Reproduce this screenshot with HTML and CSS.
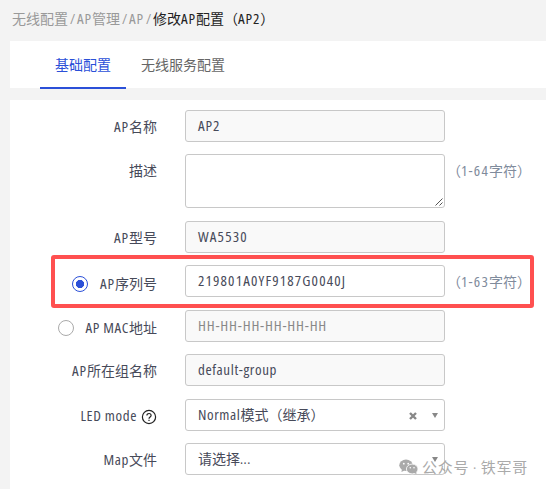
FILE: index.html
```html
<!DOCTYPE html>
<html lang="zh-CN">
<head>
<meta charset="utf-8">
<title>修改AP配置</title>
<link rel="stylesheet" href="styles.css">
</head>
<body>
<nav class="crumbs"><span>无线配置</span><i>/</i><span><span class="latin">AP</span>管理</span><i>/</i><span class="latin">AP</span><i>/</i><b>修改<span class="latin">AP</span>配置（<span class="latin">AP2</span>）</b></nav>
<div class="tabs"><a class="tab active">基础配置</a><a class="tab">无线服务配置</a></div>
<main class="form">
  <div class="row"><label><span class="latin">AP</span>名称</label><div class="field disabled"><span class="latin">AP2</span></div></div>
  <div class="row tall"><label>描述</label><div class="field area"><svg class="grip" width="8" height="8" viewBox="0 0 8 8"><path d="M.5 7.5l7-7M4.5 7.5l3-3"/></svg></div><span class="hint">（<span class="latin">1-64</span>字符）</span></div>
  <div class="row"><label><span class="latin">AP</span>型号</label><div class="field disabled"><span class="latin num">WA5530</span></div></div>
  <div class="row serial"><label><span class="radio checked"></span><span class="latin">AP</span>序列号</label><div class="field"><span class="latin num">219801A0YF9187G0040J</span></div><span class="hint">（<span class="latin">1-63</span>字符）</span><div class="highlight"></div></div>
  <div class="row mac"><label><span class="radio"></span><span class="latin word">AP MAC</span>地址</label><div class="field disabled placeholder"><span class="latin mask">HH-HH-HH-HH-HH-HH</span></div></div>
  <div class="row"><label><span class="latin">AP</span>所在组名称</label><div class="field disabled"><span class="latin word">default-group</span></div></div>
  <div class="row led"><label><span class="latin word">LED mode</span><svg class="help" width="16" height="16" viewBox="0 0 16 16"><circle cx="8" cy="8" r="6.6"/><path d="M5.9 6.5c0-2.7 4.2-2.6 4.2 0 0 1.5-2.1 1.5-2.1 3.2M8 10.8v1.3"/></svg></label><div class="field select"><span class="latin word">Normal</span>模式（继承）<svg class="clear" width="8" height="8" viewBox="0 0 8 8"><path d="M1 1l6 6M7 1L1 7"/></svg><svg class="arrow" width="6" height="5" viewBox="0 0 6 5"><path d="M0 0h6L3 5z"/></svg></div></div>
  <div class="row"><label><span class="latin word">Map</span>文件</label><div class="field select">请选择<span class="dots">...</span><svg class="arrow" width="6" height="5" viewBox="0 0 6 5"><path d="M0 0h6L3 5z"/></svg></div></div>
</main>
<div class="watermark"><svg width="20" height="16" viewBox="0 0 20 16"><ellipse cx="7" cy="6.2" rx="6.7" ry="5.7"/><path d="M3 10l-.6 3 3.2-1.6z"/><circle class="eye" cx="4.8" cy="4.7" r=".9"/><circle class="eye" cx="9.2" cy="4.7" r=".9"/><ellipse class="front" cx="13.2" cy="10" rx="5.8" ry="4.9"/><path d="M15 13.7l2.5 1.6-.4-2.8z"/><circle class="eye" cx="11.3" cy="8.7" r=".8"/><circle class="eye" cx="15" cy="8.7" r=".8"/></svg><span>公众号 · 铁军哥</span></div>
</body>
</html>
```
FILE: styles.css
```css
* { box-sizing: border-box; }
body {
  margin: 0;
  height: 489px;
  overflow: hidden;
  background: #f3f3f3;
  color: #474a59;
  font: 14px/20px "Open Sans", "Noto Sans CJK SC", sans-serif;
  font-stretch: 75%;
}
.latin { font-size: 15px; line-height: 18px; letter-spacing: .9px; }
.latin.word { letter-spacing: .6px; }
.latin.num { letter-spacing: 1.15px; }
.latin.mask { letter-spacing: .8px; }
.dots { letter-spacing: .5px; }
.crumbs { height: 41px; padding: 9px 0 0 12px; color: #999; white-space: nowrap; }
.crumbs i { display: inline-block; width: 9px; text-align: center; font-style: normal; }
.crumbs b { color: #222; font-weight: 400; }
.tabs { display: flex; height: 47px; margin-left: 10px; padding-left: 30px; background: #fff; }
.tab { height: 48px; padding: 14px 15px 0; color: #666; }
.tab.active { color: #2b50d8; border-bottom: 2px solid #2b50d8; }
.form { height: 389px; margin: 12px 0 0 10px; padding-top: 10px; background: #fff; }
.row { position: relative; display: grid; grid-template-columns: 147px 260px auto; column-gap: 28px; height: 32px; margin-bottom: 12.4px; }
.row.tall { height: 54px; }
.row.led { margin-top: 12.7px; }
label { display: flex; justify-content: flex-end; align-items: center; height: 34px; white-space: nowrap; }
label .latin { margin-bottom: 2px; }
.serial label { height: 37px; }
.mac label { height: 36px; }
.field { position: relative; height: 32px; padding: 5px 12px; border: 1px solid #c8c8c8; border-radius: 3px; background: #fff; white-space: nowrap; }
.disabled { background: #f9f9f9; }
.placeholder { color: #888; }
.area { height: 54px; }
.hint { margin-left: -26px; padding-top: 7px; color: #7f8b9c; white-space: nowrap; }
.hint .latin { letter-spacing: 1.2px; }
.radio { width: 16px; height: 16px; margin-right: 12px; border: 1px solid #aaa; border-radius: 50%; }
.mac .radio { margin-right: 11px; }
.radio.checked { border-color: #2b50d8; background: radial-gradient(circle, #2b50d8 3.8px, transparent 4.4px); }
.highlight { position: absolute; left: 41px; top: -10px; width: 483px; height: 53px; border: 4px solid #ff5050; border-radius: 3px; }
.help { margin: 2px 0 0 4px; fill: none; stroke: #222; stroke-width: 1.2; }
.grip { position: absolute; right: 1px; bottom: 1px; fill: none; stroke: #555; }
.clear { position: absolute; right: 27px; top: 12px; fill: none; stroke: #888; stroke-width: 2.4; }
.arrow { position: absolute; right: 6px; top: 13px; fill: #888; }
.watermark { position: absolute; left: 399px; top: 457px; display: flex; align-items: center; gap: 3px; color: #aaa; font-size: 15px; letter-spacing: .8px; white-space: nowrap; }
.watermark svg { fill: #aaa; }
.watermark .eye { fill: #fff; }
.watermark .front { stroke: #fff; stroke-width: .8; }
```
